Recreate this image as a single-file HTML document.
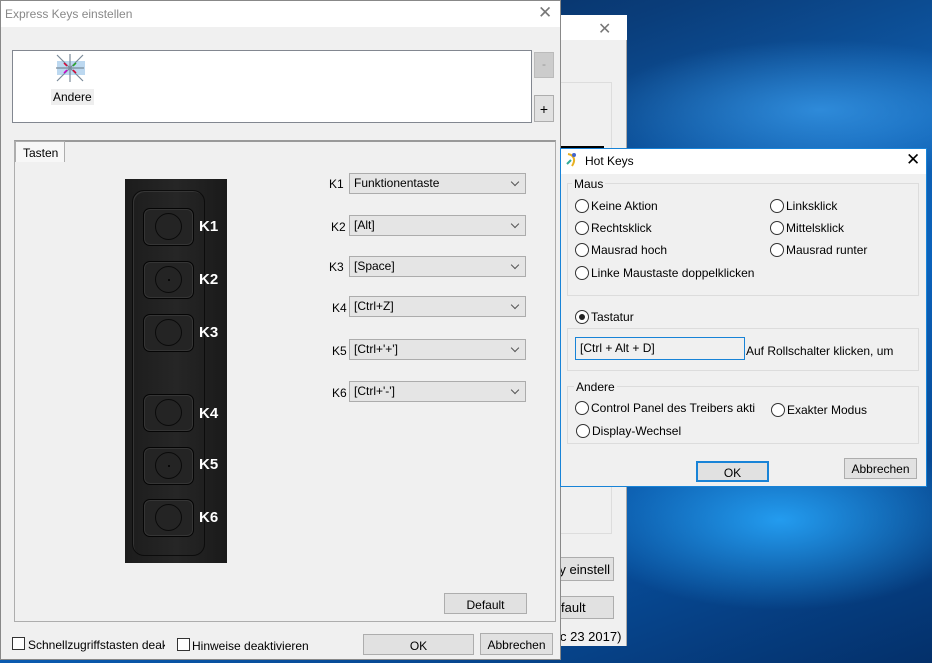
<!DOCTYPE html>
<html><head><meta charset="utf-8">
<style>
*{box-sizing:border-box;margin:0;padding:0}
body{width:932px;height:663px;overflow:hidden;position:relative;font-family:"Liberation Sans",sans-serif;font-size:12px;color:#000;
background:
radial-gradient(ellipse 200px 90px at 780px 520px,rgba(40,170,255,.85),rgba(20,120,220,0) 100%),
radial-gradient(ellipse 220px 70px at 820px 110px,rgba(60,160,240,.7),rgba(20,100,200,0) 100%),
linear-gradient(160deg,#03204a 0%,#0a3d7a 25%,#0f5fb0 45%,#0b62bb 60%,#074a95 80%,#04306a 100%);}
.a{position:absolute;white-space:nowrap}
.btn{position:absolute;background:#e1e1e1;border:1px solid #adadad;text-align:center;font-size:12px;white-space:nowrap;overflow:hidden}
.dd{position:absolute;left:349px;width:177px;height:21px;background:#e5e5e5;border:1px solid #acacac;padding:2px 0 0 4px;font-size:12px}
.dd:after{content:"";position:absolute;right:7px;top:5px;width:5px;height:5px;border-right:1px solid #555;border-bottom:1px solid #555;transform:rotate(45deg)}
.kl{position:absolute;left:329px;font-size:12px}
.key{position:absolute;left:143px;width:51px;height:38px;border:1.5px solid #050505;border-radius:7px;background:#242424;box-shadow:inset 0 0 0 1px #353535}
.key i{position:absolute;left:11px;top:4px;width:27px;height:27px;border:1.5px solid #0a0a0a;border-radius:50%}
.key b{position:absolute;left:23.5px;top:16.5px;width:2px;height:2px;background:#000;border-radius:50%}
.kt{position:absolute;left:199px;color:#fff;font-weight:bold;font-size:15px}
.r{position:absolute;font-size:12px;padding-left:16px;line-height:14px;white-space:nowrap}
.r:before{content:"";position:absolute;left:0;top:0;width:12px;height:12px;border:1px solid #333;border-radius:50%;background:#fff}
.r.on:after{content:"";position:absolute;left:3.5px;top:3.5px;width:6px;height:6px;border-radius:50%;background:#222}
.grp{position:absolute;border:1px solid #dcdcdc}
.gl{position:absolute;background:#f0f0f0;padding:0 2px;font-size:12px}
.cb{position:absolute;width:13px;height:13px;border:1px solid #333;background:#fff}
</style></head><body>

<!-- background window -->
<div class="a" style="left:560px;top:15px;width:67px;height:631px;background:#f0f0f0;border-right:1px solid #aaa"></div>
<div class="a" style="left:560px;top:15px;width:67px;height:25px;background:#fff"></div>
<div class="a" style="left:598px;top:19px;font-size:16px;color:#777">✕</div>
<div class="a" style="left:560px;top:82px;width:52px;height:452px;border:1px solid #ddd;background:#f0f0f0"></div>
<div class="a" style="left:560px;top:146px;width:44px;height:3px;background:#000"></div>
<div class="btn" style="left:548px;top:557px;width:66px;height:24px;padding-top:4px;text-align:right;padding-right:3px;font-size:13px">ey einstell</div>
<div class="btn" style="left:548px;top:596px;width:66px;height:23px;padding-top:3px;font-size:13px;text-align:left;padding-left:12px">fault</div>
<div class="a" style="left:560px;top:629px;font-size:13px">c 23 2017)</div>

<!-- main window -->
<div class="a" style="left:0;top:0;width:561px;height:660px;background:#f0f0f0;border:1px solid #888"></div>
<div class="a" style="left:1px;top:1px;width:559px;height:26px;background:#fff"></div>
<div class="a" style="left:5px;top:7px;font-size:12px;color:#888">Express Keys einstellen</div>
<div class="a" style="left:538px;top:3px;font-size:17px;color:#777">✕</div>

<div class="a" style="left:12px;top:50px;width:520px;height:73px;background:#fff;border:1px solid #828790"></div>
<svg class="a" style="left:55px;top:53px" width="30" height="30" viewBox="0 0 30 30">
<rect x="2" y="8" width="28" height="14" fill="#bcd8f0"/>
<path d="M2 2L28 28M28 2L2 28M15 1V29M1 15H29" stroke="#7a8a99" stroke-width="1.2"/>
<path d="M12 13l-3 -3M18 17l3 3" stroke="#d03" stroke-width="1.5"/>
<path d="M12 17l-3 3" stroke="#c0c" stroke-width="1.5"/><path d="M18 13l3 -3" stroke="#2a2" stroke-width="1.5"/>
</svg>
<div class="a" style="left:51px;top:89px;padding:1px 2px;background:#eee;font-size:12px">Andere</div>
<div class="btn" style="left:534px;top:52px;width:20px;height:26px;background:#ccc;border-color:#bbb;color:#999;padding-top:4px">-</div>
<div class="btn" style="left:534px;top:95px;width:20px;height:27px;padding-top:5px;font-size:14px">+</div>

<!-- tab panel -->
<div class="a" style="left:14px;top:140px;width:542px;height:482px;border:1px solid #adadad;border-top:2px solid #999;background:#f0f0f0"></div>
<div class="a" style="left:15px;top:141px;width:50px;height:21px;background:#f7f7f7;border:1px solid #adadad;border-bottom:none;padding:4px 0 0 7px">Tasten</div>

<!-- device -->
<div class="a" style="left:125px;top:179px;width:102px;height:384px;background:linear-gradient(90deg,#1c1c1c,#262626 50%,#1a1a1a)"></div>
<div class="a" style="left:132px;top:190px;width:73px;height:366px;border:1px solid #0c0c0c;border-radius:12px;box-shadow:inset 1px 1px 0 #353535"></div>
<div class="key" style="top:208px"><i></i></div><div class="kt" style="top:218px">K1</div>
<div class="key" style="top:261px"><i></i><b></b></div><div class="kt" style="top:271px">K2</div>
<div class="key" style="top:314px"><i></i></div><div class="kt" style="top:324px">K3</div>
<div class="key" style="top:394px"><i></i></div><div class="kt" style="top:405px">K4</div>
<div class="key" style="top:447px"><i></i><b></b></div><div class="kt" style="top:456px">K5</div>
<div class="key" style="top:499px"><i></i></div><div class="kt" style="top:509px">K6</div>

<div class="kl" style="top:177px">K1</div><div class="dd" style="top:173px">Funktionentaste</div>
<div class="kl" style="top:220px;left:331px">K2</div><div class="dd" style="top:215px">[Alt]</div>
<div class="kl" style="top:260px">K3</div><div class="dd" style="top:256px">[Space]</div>
<div class="kl" style="top:301px;left:332px">K4</div><div class="dd" style="top:296px">[Ctrl+Z]</div>
<div class="kl" style="top:344px;left:332px">K5</div><div class="dd" style="top:339px">[Ctrl+'+']</div>
<div class="kl" style="top:386px;left:332px">K6</div><div class="dd" style="top:381px">[Ctrl+'-']</div>

<div class="btn" style="left:444px;top:593px;width:83px;height:21px;padding-top:4px">Default</div>

<div class="cb" style="left:12px;top:637px"></div>
<div class="a" style="left:28px;top:638px;width:137px;overflow:hidden">Schnellzugriffstasten deaktiv</div>
<div class="cb" style="left:177px;top:638px"></div>
<div class="a" style="left:192px;top:639px">Hinweise deaktivieren</div>
<div class="btn" style="left:363px;top:634px;width:111px;height:21px;padding-top:4px">OK</div>
<div class="btn" style="left:480px;top:633px;width:73px;height:22px;padding-top:4px">Abbrechen</div>

<!-- Hot Keys dialog -->
<div class="a" style="left:560px;top:148px;width:367px;height:339px;background:#f0f0f0;border:1px solid #1883d7"></div>
<div class="a" style="left:561px;top:149px;width:365px;height:25px;background:#fff"></div>
<svg class="a" style="left:565px;top:152px" width="14" height="16" viewBox="0 0 14 16"><path d="M3 2c6 1 8 6 4 12" stroke="#e8b020" stroke-width="2" fill="none"/><path d="M2 12l4 -4" stroke="#3a9" stroke-width="2"/><circle cx="9" cy="3" r="2" fill="#46c"/></svg>
<div class="a" style="left:585px;top:154px;font-size:12px">Hot Keys</div>
<div class="a" style="left:906px;top:150px;font-size:17px">✕</div>

<div class="grp" style="left:567px;top:183px;width:352px;height:113px"></div>
<div class="gl" style="left:572px;top:177px">Maus</div>
<div class="r" style="left:575px;top:199px">Keine Aktion</div>
<div class="r" style="left:575px;top:221px">Rechtsklick</div>
<div class="r" style="left:575px;top:243px">Mausrad hoch</div>
<div class="r" style="left:575px;top:266px">Linke Maustaste doppelklicken</div>
<div class="r" style="left:770px;top:199px">Linksklick</div>
<div class="r" style="left:770px;top:221px">Mittelsklick</div>
<div class="r" style="left:770px;top:243px">Mausrad runter</div>

<div class="r on" style="left:575px;top:310px">Tastatur</div>
<div class="grp" style="left:567px;top:328px;width:352px;height:43px"></div>
<div class="a" style="left:575px;top:337px;width:170px;height:23px;border:1px solid #1883d7;background:#f0f0f0;padding:3px 0 0 4px">[Ctrl + Alt + D]</div>
<div class="a" style="left:746px;top:344px">Auf Rollschalter klicken, um</div>

<div class="grp" style="left:567px;top:386px;width:352px;height:58px"></div>
<div class="gl" style="left:574px;top:380px">Andere</div>
<div class="r" style="left:575px;top:401px">Control Panel des Treibers akti</div>
<div class="r" style="left:771px;top:403px">Exakter Modus</div>
<div class="r" style="left:576px;top:424px">Display-Wechsel</div>

<div class="btn" style="left:696px;top:461px;width:73px;height:21px;border:2px solid #1883d7;padding-top:3px">OK</div>
<div class="btn" style="left:844px;top:458px;width:73px;height:21px;padding-top:3px">Abbrechen</div>
</body></html>
